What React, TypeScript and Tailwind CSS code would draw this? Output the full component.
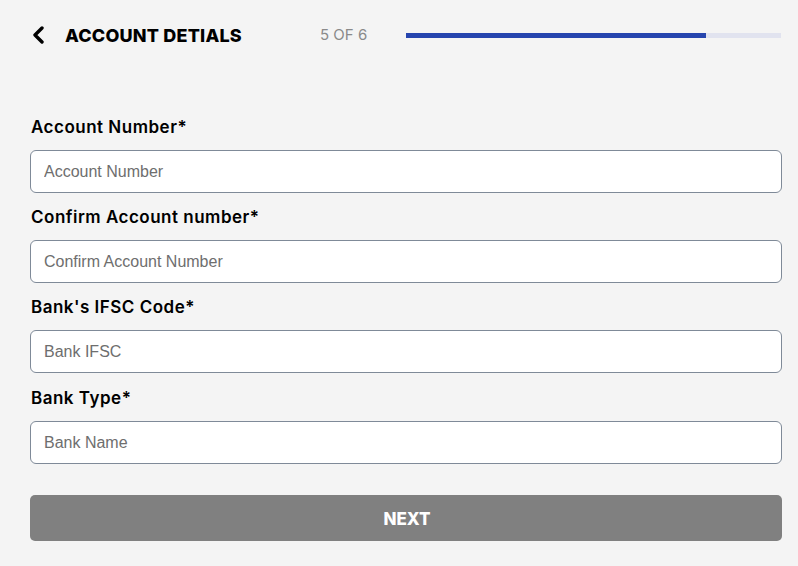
import React from "react";

const fields = [
  { label: "Account Number*", ph: "Account Number" },
  { label: "Confirm Account number*", ph: "Confirm Account Number" },
  { label: "Bank's IFSC Code*", ph: "Bank IFSC" },
  { label: "Bank Type*", ph: "Bank Name" },
];

export default function App() {
  return (
    <div className="w-[798px] h-[566px] bg-[#f4f4f4] overflow-hidden" style={{ fontFamily: "Inter, 'Noto Sans', sans-serif" }}>
      <div className="flex items-center h-[24px] mt-[23px] pl-[31px] pr-[17px]">
        <svg width="16" height="18" viewBox="0 0 16 18" className="mr-[18px]">
          <path d="M11 2 L4 9 L11 16" stroke="#000" strokeWidth="3.4" fill="none" strokeLinecap="round" strokeLinejoin="round" />
        </svg>
        <div className="text-[18px] font-extrabold text-black tracking-[0.2px] w-[255px]">ACCOUNT DETIALS</div>
        <div className="text-[15px] text-[#8a8a8a] w-[86px]">5 OF 6</div>
        <div className="flex-1 h-[5px] bg-[#e1e3ef] mt-[1px]">
          <div className="h-full w-[80%] bg-[#2645ae]" />
        </div>
      </div>
      <div className="flex flex-col gap-[12px] mt-[68px] pl-[30px] pr-[16px]">
        {fields.map((f, i) => (
          <div key={f.label} className={"flex flex-col" + (i === 3 ? " mt-[1px]" : "")}>
            <div className="h-[24px] leading-[24px] text-[17px] font-semibold tracking-[0.5px] text-black pl-[1px] mb-[11px]">{f.label}</div>
            <input
              placeholder={f.ph}
              className="h-[43px] w-full rounded-[6px] border border-[#7f8a98] bg-white px-[13px] text-[16px] placeholder:text-[#6e6e6e] outline-none"
              style={{ fontFamily: "'Liberation Sans', Arial, sans-serif" }}
            />
          </div>
        ))}
      </div>
      <div className="pl-[30px] pr-[16px] mt-[31px]">
        <button className="w-full h-[46px] rounded-[5px] bg-[#808080] text-white text-[17px] font-extrabold pl-[2px] pt-[3px]">NEXT</button>
      </div>
    </div>
  );
}
